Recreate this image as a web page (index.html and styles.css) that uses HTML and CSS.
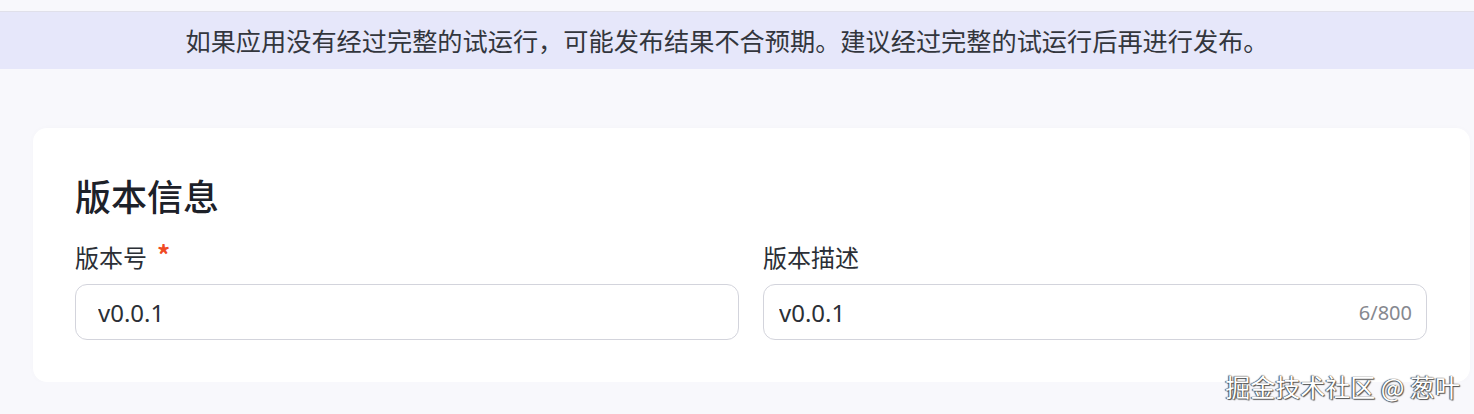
FILE: index.html
```html
<!DOCTYPE html>
<html lang="zh-CN">
<head>
  <meta charset="UTF-8">
  <title>发布版本</title>
  <link rel="stylesheet" href="styles.css">
</head>
<body>

<div class="notice">如果应用没有经过完整的试运行，可能发布结果不合预期。建议经过完整的试运行后再进行发布。</div>

<div class="card">
  <h2>版本信息</h2>
  <div class="row">
    <div class="field">
      <label>版本号<span class="req">*</span></label>
      <div class="box box-left">
        <input type="text" value="v0.0.1">
      </div>
    </div>
    <div class="field">
      <label>版本描述</label>
      <div class="box box-right">
        <input type="text" value="v0.0.1">
        <span class="count">6/800</span>
      </div>
    </div>
  </div>
</div>

<div class="mark">掘金技术社区 @ 葱叶</div>

</body>
</html>
```

FILE: styles.css
```css
body {
  font-family: "Noto Sans CJK SC", "Noto Sans", sans-serif;
  background-color: #f8f8fc;
  margin: 0;
  padding-top: 11px;
  color: #1f2329;
}

.notice {
  background-color: #e6e7fa;
  border-top: 1px solid #e0e0ea;
  height: 57px;
  line-height: 57px;
  font-size: 25.2px;
  color: #33363d;
  text-align: center;
  padding-right: 20px;
}

.card {
  background-color: #fff;
  margin: 59px 4px 0 33px;
  padding: 42px 43px 42px 42px;
  border-radius: 14px;
  box-shadow: 0 0 6px rgba(0,0,0,0.02);
}

h2 {
  margin: 0;
  font-size: 36px;
  line-height: 50px;
  font-weight: 500;
  color: #1d2129;
}

.row {
  display: flex;
  gap: 24px;
  margin-top: 20px;
}

.field {
  flex: 1;
}

label {
  display: block;
  height: 34px;
  font-size: 24px;
  line-height: 34px;
  color: #2b2f36;
}

.req {
  color: #f04a24;
  font-size: 26px;
  line-height: 1;
  font-weight: 700;
  margin-left: 10px;
  position: relative;
  top: -2px;
}

.box {
  display: flex;
  align-items: center;
  height: 54px;
  margin-top: 10px;
  border: 1px solid #d3d4dc;
  border-radius: 12px;
  background-color: #fff;
}

.box-left {
  padding: 0 22px;
}

.box-right {
  padding: 0 14px 0 15px;
}

.box input {
  flex: 1;
  min-width: 0;
  border: none;
  outline: none;
  padding: 0;
  background: transparent;
  font-family: "Noto Sans", "Noto Sans CJK SC", sans-serif;
  font-size: 24px;
  color: #2b2f36;
}

.count {
  font-family: "Noto Sans", sans-serif;
  font-size: 20px;
  color: #86888f;
}

.mark {
  position: absolute;
  right: 14px;
  top: 368px;
  font-size: 25px;
  color: #fff;
  text-shadow: 0 0 1px #333, 1px 1px 1px #555, -1px 0 1px #555;
}
```
